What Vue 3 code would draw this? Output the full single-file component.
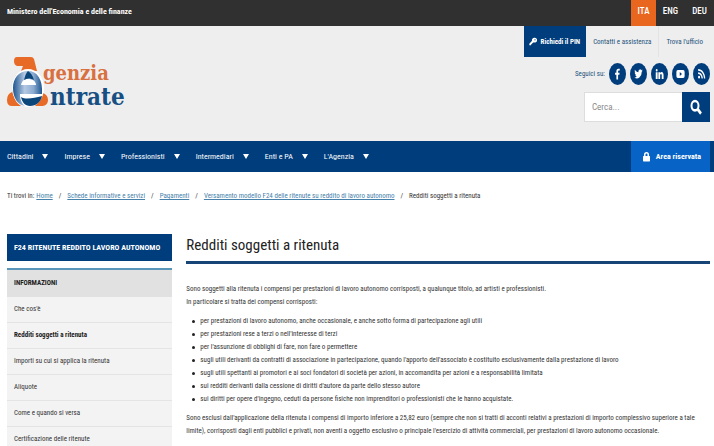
<script setup>
import { ref } from 'vue';

const search = ref('');

const languages = ['ITA', 'ENG', 'DEU'];
const menu = ['Cittadini', 'Imprese', 'Professionisti', 'Intermediari', 'Enti e PA', "L'Agenzia"];

const socials = [
  { name: 'Facebook', path: 'M13.5 23v-9.500h3.500l.5-4h-4V7c0-1.200.6-1.900 2-1.900H18V1.300h-3.500c-3.600 0-5.500 2-5.500 5.200v3H5.500v4H9V23z' },
  { name: 'Twitter', path: 'M23 5c-.8.4-1.700.6-2.600.7.9-.6 1.600-1.400 2-2.500-.9.500-1.800.9-2.900 1.100a4.500 4.500 0 0 0-7.700 4.100C8 8.200 4.700 6.400 2.500 3.700c-1.200 2-.6 4.600 1.400 6-.7 0-1.400-.2-2-.5 0 2.200 1.500 4 3.600 4.500-.7.200-1.400.2-2 .1.600 1.800 2.300 3.100 4.200 3.100A9 9 0 0 1 1 18.800 13 13 0 0 0 20.700 7.300C21.600 6.700 22.400 5.900 23 5z' },
  { name: 'LinkedIn', path: 'M2 8.500h5V22H2zM4.500 2a2.500 2.500 0 1 1 0 5 2.500 2.500 0 0 1 0-5zM9 8.500h4.500v1.800c.7-1.300 2-2.200 4-2.200 4 0 5.300 2.600 5.300 6.500V22H18v-6.500c0-1.600 0-3.400-2-3.400s-2.300 1.700-2.300 3.300V22H9z' },
  { name: 'YouTube', path: 'M5 4h14q4 0 4 4v8q0 4-4 4H5q-4 0-4-4V8q0-4 4-4zM10 8v8l6-4z' },
  { name: 'RSS', path: 'M3 2v3.500c8.500 0 15.500 7 15.500 15.500H22C22 10.500 13.500 2 3 2zM3 8.500V12c5 0 9 4 9 9h3.500C15.500 14 10 8.500 3 8.500zM5.500 15.500a2.700 2.700 0 1 0 0 5.500 2.700 2.700 0 0 0 0-5.500z' },
];

const breadcrumb = [
  'Home',
  'Schede informative e servizi',
  'Pagamenti',
  'Versamento modello F24 delle ritenute su reddito di lavoro autonomo',
];

const sideLinks = [
  "Che cos'è",
  'Redditi soggetti a ritenuta',
  'Importi su cui si applica la ritenuta',
  'Aliquote',
  'Come e quando si versa',
  'Certificazione delle ritenute',
];
const current = 'Redditi soggetti a ritenuta';

const incomes = [
  'per prestazioni di lavoro autonomo, anche occasionale, e anche sotto forma di partecipazione agli utili',
  "per prestazioni rese a terzi o nell'interesse di terzi",
  "per l'assunzione di obblighi di fare, non fare o permettere",
  "sugli utili derivanti da contratti di associazione in partecipazione, quando l'apporto dell'associato è costituito esclusivamente dalla prestazione di lavoro",
  'sugli utili spettanti ai promotori e ai soci fondatori di società per azioni, in accomandita per azioni e a responsabilità limitata',
  "sui redditi derivanti dalla cessione di diritti d'autore da parte dello stesso autore",
  "sui diritti per opere d'ingegno, ceduti da persone fisiche non imprenditori o professionisti che le hanno acquistate.",
];
</script>

<template>
  <div class="page">
    <div class="topbar">
      <a href="#" class="ministry">Ministero dell'Economia e delle finanze</a>
      <nav class="languages" aria-label="Lingua">
        <a v-for="lang in languages" :key="lang" href="#" :class="{ active: lang === 'ITA' }">{{ lang }}</a>
      </nav>
    </div>

    <header class="header">
      <a href="#" class="logo" aria-label="Agenzia Entrate">
        <svg class="logo-mark" viewBox="0 0 42 50" aria-hidden="true">
          <defs>
            <linearGradient id="letter" x1="0" y1="0" x2="1" y2="0">
              <stop offset="0" stop-color="#1d5690" />
              <stop offset="0.4" stop-color="#b4c8e3" />
              <stop offset="0.7" stop-color="#8cabd0" />
              <stop offset="1" stop-color="#1d5690" />
            </linearGradient>
          </defs>
          <path fill="#e86a27" d="M10 0h14q2 0 3 2l3 12H14l2-5h-6Q7 8 7 4q0-4 3-4z" />
          <path fill="#e86a27" d="M9 18 5 35Q0 37 0 43q0 6 5 6h9q-6-4-7-10zM32 16l4 20q5 2 5 7t-5 6h-8q6-5 7-13z" />
          <ellipse cx="21" cy="31" rx="16" ry="19" fill="#fff" />
          <path fill="url(#letter)" fill-rule="evenodd" d="M21 14C12 14 6 21 6 31s5 17 12 18c-4-3-5-8-5-12h22C36 22 30 14 21 14zM14 28c1-4 3-6 7-6s8 2 8 6z" />
          <path fill="#0b467b" d="M21 14c-2 2-3 5-4 9 3-2 6-2 10 0-1-4-3-7-6-9z" />
          <path fill="#0b467b" d="M14 40c5 3 13 1 21-1-1 6-6 10-12 10-5 0-8-4-9-9z" />
        </svg>
        <span class="logo-text">
          <span class="logo-top">genzia</span>
          <span class="logo-bottom">ntrate</span>
        </span>
      </a>

      <div class="tools">
        <div class="service-links">
          <a href="#" class="pin">
            <svg viewBox="0 0 24 24" aria-hidden="true">
              <path fill="#fff" fill-rule="evenodd" d="M16 1a7 7 0 0 0-7 9L1 19v4h5v-3h3v-3h2l3-3a7 7 0 1 0 2-13zm2 4a2 2 0 1 1 0 4 2 2 0 0 1 0-4z" />
            </svg>
            Richiedi il PIN
          </a>
          <a href="#">Contatti e assistenza</a>
          <a href="#">Trova l'ufficio</a>
        </div>
        <div class="socials">
          <span>Seguici su:</span>
          <a v-for="social in socials" :key="social.name" href="#" :aria-label="social.name">
            <svg viewBox="0 0 24 24" preserveAspectRatio="none" aria-hidden="true">
              <path fill="#fff" fill-rule="evenodd" :d="social.path" />
            </svg>
          </a>
        </div>
        <form class="search" @submit.prevent>
          <input v-model="search" type="text" placeholder="Cerca..." aria-label="Cerca" />
          <button type="submit" aria-label="Avvia la ricerca">
            <svg viewBox="0 0 24 24" preserveAspectRatio="none" aria-hidden="true">
              <circle cx="10" cy="10" r="7" fill="none" stroke="#fff" stroke-width="4" />
              <path d="m15 15 7 7" stroke="#fff" stroke-width="5" />
            </svg>
          </button>
        </form>
      </div>
    </header>

    <nav class="menu" aria-label="Menu principale">
      <button v-for="item in menu" :key="item" type="button">
        {{ item }}
        <svg viewBox="0 0 6 5" aria-hidden="true"><path fill="#fff" d="M0 0h6L3 5z" /></svg>
      </button>
      <a href="#" class="reserved">
        <svg viewBox="0 0 14 20" aria-hidden="true">
          <path fill="#fff" fill-rule="evenodd" d="M1 9h1V6a5 5 0 0 1 10 0v3h1l1 1v9l-1 1H1l-1-1v-9zm4 0h4V6a2 2 0 0 0-4 0z" />
        </svg>
        Area riservata
      </a>
    </nav>

    <nav class="breadcrumb" aria-label="Percorso">
      <span class="here">Ti trovi in:</span>
      <template v-for="crumb in breadcrumb" :key="crumb">
        <a href="#">{{ crumb }}</a>
        <span>/</span>
      </template>
      <span>Redditi soggetti a ritenuta</span>
    </nav>

    <div class="content">
      <aside class="sidebar">
        <h2>F24 RITENUTE REDDITO LAVORO AUTONOMO</h2>
        <h3>INFORMAZIONI</h3>
        <ul>
          <li v-for="link in sideLinks" :key="link">
            <a href="#" :class="{ current: link === current }">{{ link }}</a>
          </li>
        </ul>
      </aside>

      <main class="article">
        <h1>Redditi soggetti a ritenuta</h1>
        <p>
          Sono soggetti alla ritenuta i compensi per prestazioni di lavoro autonomo corrisposti, a qualunque titolo, ad artisti e professionisti.<br />
          In particolare si tratta dei compensi corrisposti:
        </p>
        <ul>
          <li v-for="income in incomes" :key="income">{{ income }}</li>
        </ul>
        <p>
          Sono esclusi dall'applicazione della ritenuta i compensi di importo inferiore a 25,82 euro (sempre che non si tratti di acconti relativi a prestazioni di importo complessivo superiore a tale limite), corrisposti dagli enti pubblici e privati, non aventi a oggetto esclusivo o principale l'esercizio di attività commerciali, per prestazioni di lavoro autonomo occasionale.
        </p>
      </main>
    </div>
  </div>
</template>

<style>
html,
body {
  height: 100%;
  overflow: hidden;
  background: #fff;
}
</style>

<style scoped>
.page {
  font-family: 'Roboto Condensed', Roboto, sans-serif;
  font-size: 7px;
  color: #333;
}
a {
  color: inherit;
  text-decoration: none;
}
h1,
h2,
h3,
p,
ul {
  margin: 0;
  padding: 0;
}
.topbar {
  display: flex;
  justify-content: space-between;
  height: 26px;
  padding-left: 7px;
  background: #303030;
  color: #fff;
  line-height: 23px;
}
.ministry {
  font-size: 8px;
  font-weight: bold;
}
.languages {
  display: flex;
  font-size: 9px;
  font-weight: 500;
}
.languages a {
  width: 29px;
  text-align: center;
}
.languages .active {
  width: 25px;
  background: #e9661f;
}
.header {
  display: flex;
  justify-content: space-between;
  height: 115px;
  padding: 0 4px 0 7px;
  background: #eee;
}
.logo {
  display: flex;
  align-items: flex-start;
  padding-top: 31px;
}
.logo-mark {
  width: 42px;
  height: 50px;
}
.logo-text {
  display: flex;
  flex-direction: column;
  margin-left: -6px;
  font-family: 'DejaVu Serif Condensed', 'DejaVu Serif', serif;
  font-weight: bold;
}
.logo-top {
  padding-top: 4px;
  font-size: 20px;
  line-height: 24px;
  color: #d9703f;
}
.logo-bottom {
  padding-left: 7px;
  font-size: 24px;
  line-height: 24px;
  color: #174f83;
}
.tools {
  display: flex;
  flex-direction: column;
  align-items: flex-end;
}
.service-links {
  display: flex;
  height: 31px;
  line-height: 32px;
  color: #24527d;
}
.service-links a {
  padding: 0 7px;
}
.service-links a + a + a {
  border-left: 1px solid #e3e3e3;
}
.service-links .pin {
  display: flex;
  align-items: center;
  gap: 4px;
  padding: 0 6px 0 5px;
  background: #003d7c;
  color: #fff;
  font-weight: bold;
}
.pin svg {
  width: 8px;
  height: 9px;
}
.socials {
  display: flex;
  align-items: center;
  gap: 4px;
  padding-top: 6px;
  color: #24527d;
}
.socials a {
  display: flex;
  align-items: center;
  justify-content: center;
  width: 17px;
  height: 22px;
  border-radius: 50%;
  background: #003d7c;
}
.socials svg {
  width: 9px;
  height: 12px;
}
.search {
  display: flex;
  height: 30px;
  padding-top: 7px;
}
.search input {
  box-sizing: border-box;
  width: 98px;
  padding: 0 7px;
  border: 1px solid #ddd;
  border-right: 0;
  background: #fff;
  font: inherit;
  font-size: 9px;
}
.search input::placeholder {
  color: #888;
}
.search button {
  width: 28px;
  padding: 0;
  border: 0;
  background: #003d7c;
}
.search svg {
  width: 12px;
  height: 16px;
  vertical-align: middle;
}
.menu {
  display: flex;
  gap: 16px;
  height: 31px;
  padding: 0 4px 0 7px;
  background: #003d7c;
  color: #fff;
}
.menu button {
  display: flex;
  align-items: center;
  gap: 9px;
  padding: 0;
  border: 0;
  background: none;
  color: inherit;
  font: inherit;
  font-size: 8px;
}
.menu button svg {
  width: 6px;
  height: 5px;
}
.reserved {
  display: flex;
  align-items: center;
  gap: 6px;
  margin-left: auto;
  padding: 0 9px 0 12px;
  background: #0763c6;
  font-size: 8px;
  font-weight: bold;
}
.reserved svg {
  width: 7px;
  height: 11px;
}
.breadcrumb {
  display: flex;
  gap: 6px;
  padding: 18px 7px 0;
  line-height: 12px;
  white-space: nowrap;
}
.breadcrumb .here {
  margin-right: -4px;
}
.breadcrumb a {
  color: #4681ab;
  text-decoration: underline;
}
.content {
  display: grid;
  grid-template-columns: minmax(0, 6fr) minmax(0, 19fr);
  gap: 14px;
  padding: 32px 4px 0 7px;
}
.sidebar h2 {
  height: 27px;
  margin-bottom: 7px;
  padding-left: 7px;
  background: #003d7c;
  color: #fff;
  font-size: 8px;
  line-height: 27px;
  white-space: nowrap;
}
.sidebar h3 {
  padding-left: 7px;
  border-top: 2px solid #5a96b9;
  background: #e1e1e1;
  color: #222;
  font-size: 7px;
  line-height: 27px;
}
.sidebar ul {
  list-style: none;
  background: #f3f3f3;
}
.sidebar li {
  border-bottom: 1px solid #e4e4e4;
  line-height: 25px;
}
.sidebar li a {
  display: block;
  padding-left: 7px;
}
.sidebar .current {
  color: #222;
  font-weight: bold;
}
.article h1 {
  margin-bottom: 19px;
  padding-bottom: 4px;
  border-bottom: 3px solid #174578;
  color: #222;
  font-size: 15px;
  font-weight: normal;
  line-height: 23px;
}
.article p,
.article li {
  line-height: 13px;
}
.article ul {
  margin: 6px 0;
  padding-left: 6px;
  list-style: none;
}
.article li {
  display: flex;
  gap: 5px;
}
.article li::before {
  content: '';
  flex: none;
  width: 3px;
  height: 3px;
  margin-top: 5px;
  border-radius: 50%;
  background: #222;
}
</style>
